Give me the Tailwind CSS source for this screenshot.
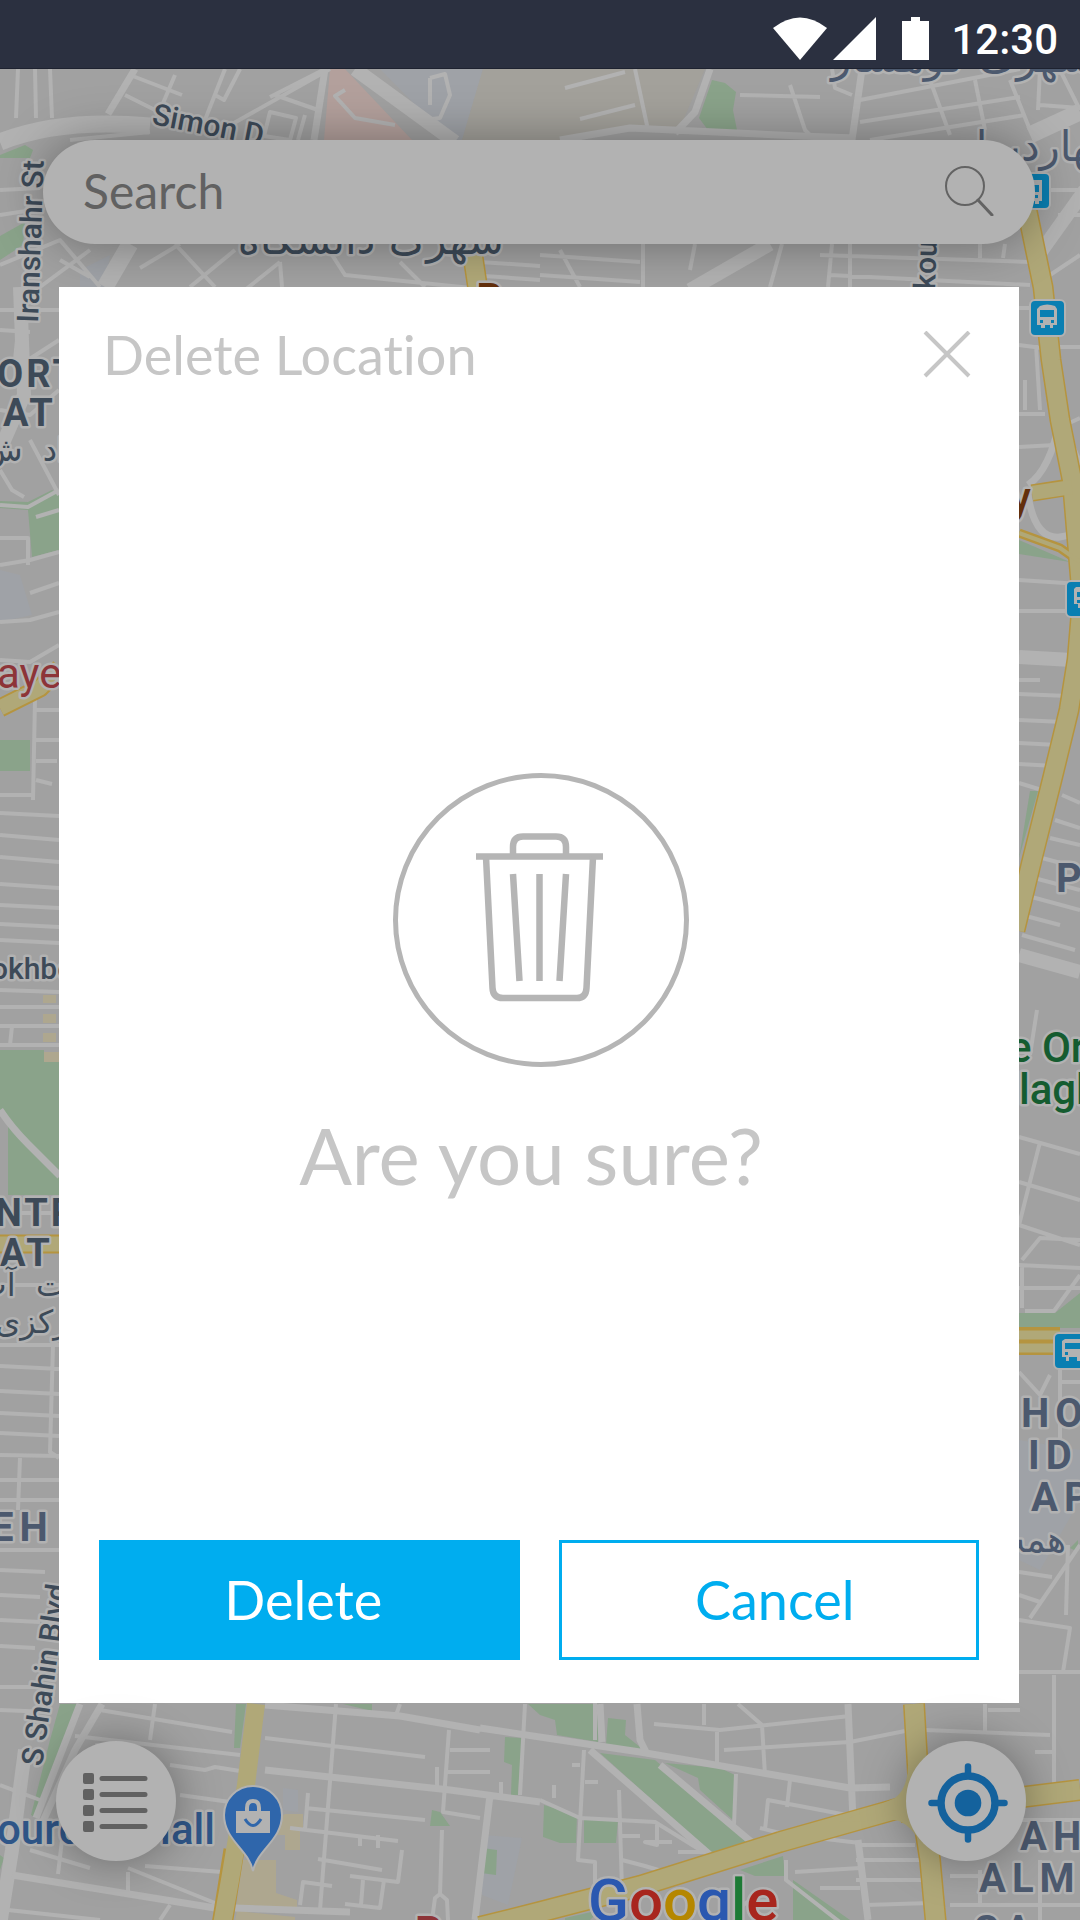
<!DOCTYPE html>
<html lang="en">
<head>
<meta charset="utf-8">
<meta name="viewport" content="width=device-width, initial-scale=1">
<title>Delete Location</title>
<script src="https://cdn.jsdelivr.net/npm/@tailwindcss/browser@4"></script>
</head>
<body class="flex min-h-screen flex-col bg-[#a1a1a1] font-['Lato',sans-serif] [font-variant-ligatures:no-common-ligatures]">

<header class="relative z-10 flex h-[69px] items-center justify-end border-b border-[#1e2230] bg-[#2b3040] pt-2 pr-[22px] text-white">
  <svg class="h-11 w-40" viewBox="0 0 160 44" fill="#fff" aria-hidden="true">
    <path d="M2 12Q29-9 56 12L29 44Z"/>
    <path d="M62 44L105 1V44Z"/>
    <path d="M131 5H140V1H149V5H158V44H131Z"/>
  </svg>
  <span class="ml-5 pt-1 font-['Roboto',sans-serif] text-[42px] leading-none font-medium">12:30</span>
</header>

<main class="relative flex grow flex-col overflow-hidden">
  <!-- Street map -->
  <svg class="absolute inset-0 size-full" viewBox="0 69 1080 1851" preserveAspectRatio="xMidYMid slice" role="img" aria-label="Map">
    <rect y="69" width="1080" height="1851" fill="#a1a1a1"/>
    <!-- built-up areas -->
    <g>
      <path fill="#b3a09c" d="M330 69H345L412 140H324Z"/>
      <path fill="#9fa2a7" d="M380 69H483L462 140H450ZM0 570L20 575 32 615 0 622ZM1019 1440L1080 1450V1500L1040 1570 1019 1560ZM80 270L110 255 105 287H80ZM283 1788L298 1790V1812L283 1810ZM482 1835L522 1838 508 1905 482 1895Z"/>
      <path fill="#a3a19b" d="M483 69H705L680 128 600 130 560 140H462Z"/>
      <path fill="#aea78f" d="M43 995H56V1003H43ZM43 1014H56V1023H43ZM43 1033H56V1042H43ZM44 1052H59V1062H44ZM242 1860H276V1893L297 1900V1912H236ZM285 1814H303V1828H300V1850H285V1835H275V1820ZM237 1911L295 1917V1920H235Z"/>
    </g>
    <!-- parks -->
    <path fill="#8aa38a" d="M0 155L25 145 33 150 30 158H0ZM0 236L25 222 23 245 0 260ZM712 80L725 83 736 92 733 110 737 130H708L699 118ZM0 501L28 502 52 490 59 493V550L32 557 28 510 0 508ZM0 740H30V771H0ZM0 1050H44V1062H59V1195H8V1122L0 1112ZM1019 540L1070 562 1019 554ZM1030 791H1038L1019 858ZM1019 1313H1055L1080 1293V1328H1019ZM60 1704H80L36 1818 31 1815 50 1740ZM236 1704H246L240 1748H234ZM343 1704H372V1711ZM505 1737L522 1738 518 1795H511L512 1765 504 1762ZM432 1810L440 1812 450 1826H430ZM482 1848L497 1850 496 1875 481 1873ZM528 1704H600L598 1742 557 1735 555 1720 540 1715ZM608 1718L626 1720 625 1735 645 1751 606 1745ZM600 1753L655 1760 750 1842 712 1854ZM665 1763L720 1768 735 1775 733 1820 700 1790 698 1778ZM544 1805L577 1815 576 1843H560L543 1837ZM584 1820H618L616 1843H584ZM740 1870L783 1856 785 1876H755ZM793 1880L850 1920H793ZM0 1855L4 1858 0 1870ZM565 1918L600 1910 590 1920H565ZM1070 1548L1078 1540V1552Z"/>
    <!-- minor streets -->
    <g fill="none" stroke="#b2b2b2" stroke-width="4" stroke-linejoin="round">
      <path d="M125 95L165 115M130 75L182 95M175 75L158 115M35 69L36 118M50 69L52 118M18 69L16 118M270 97L325 69M330 69L225 128M275 95L318 110M225 69L203 125M240 69L224 100 215 95M345 90L335 96 355 118 395 125M270 112L296 118 290 140 264 136ZM305 115L298 140M430 78V105M430 78L445 74 450 95 440 118 425 120M70 140L150 132M0 190L40 188M0 215L45 208"/>
      <path d="M140 268L180 244M190 287L235 250M245 290L280 262M175 244L215 287M280 262L282 287M325 244L345 275 540 295M400 262L425 287M470 275L540 280M480 262L540 266M60 260L90 277M0 265L60 240 100 287M40 287L90 250"/>
      <path d="M860 100L1020 69M860 122L1020 97M870 140L1025 115M930 80L950 135M975 80L985 130M1010 80L1030 130M790 85L805 130 815 140M740 95L820 97M635 69L648 130M565 88L625 72M580 119L635 105M1040 69L1038 110M1040 105L1080 108M832 69L835 88 852 95M1060 70L1080 110"/>
      <path d="M560 250L580 287M540 255L640 262M540 275L640 282M643 244V287M695 244L690 270M782 244L770 287M832 244L828 287M850 244V287M820 255L1030 262M830 275L1030 285M980 244V258M1005 244L1003 258M1050 275L1080 255M1050 190H1080M1058 215H1080"/>
      <!-- west side -->
      <path d="M0 310H59M0 330L30 332M18 330L15 360M28 360L59 340M0 410L30 415 59 390M0 470L12 490 24 497M30 440L59 495M0 505L28 507 59 490M36 517L59 510M0 538H28V565M0 565L30 560 59 552M30 593L59 583M0 622L30 620 59 612M0 660L30 662 59 645M35 700L33 800M36 710H59M36 740H59M36 761H57M0 795H33M36 780L52 784"/>
      <path d="M0 813L59 816M0 835L59 840M0 857L59 862M0 884L59 888M0 905L59 908M0 924L59 927M0 940L59 943M0 990L59 992M0 1007H59M0 1026H59M0 1045H59M12 1026L10 1045"/>
      <path d="M0 1213H59M0 1243H59M0 1285H59M0 1345H59M0 1366L59 1369M0 1391L59 1394M0 1413L59 1416M0 1433L59 1436M0 1455L59 1456M53 1345L50 1452 59 1458M20 1458L18 1510M0 1480H59M0 1500H59M0 1550H59M0 1570L45 1572M0 1595L40 1597M0 1620L40 1622M0 1646L35 1648M0 1687H55M0 1710L50 1712"/>
      <!-- east side -->
      <path d="M1060 347H1080M1019 308H1030M1019 345L1042 348M1036 345L1040 410M1025 410V380M1019 414H1045M1019 447L1055 445M1065 425L1080 418M1019 580L1080 584M1019 611H1076M1019 680H1040M1019 694L1068 696M1019 720L1064 722M1019 743L1058 745M1019 764L1055 766M1019 783L1045 791M1062 795L1080 803M1055 820L1080 828M1050 838L1080 845M1042 858L1080 868M1034 878L1080 890M1028 896L1080 910M1022 915L1060 925M1022 935L1075 950"/>
      <path d="M1037 1010L1030 1055M1019 1137L1080 1154M1040 1142L1019 1225M1019 1182L1080 1200M1019 1225L1080 1245M1022 1260L1040 1238 1080 1240M1019 1265L1080 1268M1022 1265V1308M1019 1288H1080M1025 1311H1054L1080 1275M1060 1370V1440M1060 1382H1080M1019 1372L1040 1395 1050 1375M1019 1572L1052 1577M1019 1595L1040 1602M1019 1620L1070 1628 1063 1672M1030 1618L1080 1545M1068 1545L1066 1615M1019 1672H1080M1054 1675V1790M1035 1752H1052"/>
      <!-- south side -->
      <path d="M100 1710L232 1732M75 1736L240 1755M95 1745L130 1755M155 1704L150 1740M170 1765L205 1770 215 1767 240 1771M180 1795L230 1802M0 1785L40 1800M30 1850L90 1868M62 1840L58 1874M128 1872V1892M145 1866L222 1872M128 1868L220 1905M170 1905L160 1920M8 1910L100 1920"/>
      <path d="M336 1704L320 1910M265 1738L425 1757M305 1808L425 1820M308 1793L305 1830M449 1730L443 1812 480 1818M450 1750H490M447 1772H490M525 1704L520 1795M437 1767V1790M400 1704L395 1718M290 1828L398 1841M360 1835V1846M378 1835V1848M318 1859L382 1870M350 1876L398 1882 402 1850M363 1880L361 1905M345 1904L380 1908 384 1880M442 1830L440 1895M432 1920L435 1898 440 1894 447 1900 448 1920M300 1905L303 1882 332 1886M501 1782V1800"/>
      <path d="M654 1724L720 1730 850 1716M704 1704V1725M738 1704L762 1725 765 1775M717 1730V1762M724 1750L850 1742 905 1731M736 1774L734 1825M790 1780L787 1807M765 1830L768 1800 852 1816M584 1750L578 1860 595 1862V1890M540 1800L580 1818 655 1822 710 1856M619 1790L622 1890M572 1765H580M585 1782H598M554 1785V1798M620 1836H640M657 1825V1845L645 1842 672 1842M678 1852H710M622 1860L645 1866 665 1872M786 1860V1880L850 1930M795 1872L860 1868M820 1888H860M858 1845H915M856 1860L920 1860M856 1880H922M866 1905L930 1903M950 1876H985M925 1730L1050 1735M985 1704V1735M988 1710H1020M760 1828L800 1838M800 1836L860 1843M1000 1820H1080M1000 1780V1790M950 1905H1080M980 1870V1905M1040 1860V1920M595 1700V1740M767 1890L735 1910"/>
    </g>
    <!-- wider streets -->
    <g fill="none" stroke="#b2b2b2" stroke-linejoin="round">
      <path stroke-width="17" d="M0 142Q60 118 150 126M1030 135L1080 112M130 244L105 287"/>
      <path stroke-width="14" d="M355 69L455 142M690 290L770 244M1035 260L1085 190M1019 955L1080 972M1019 657L1072 660M20 287L24 395 0 450M25 1750L12 1850 0 1925"/>
      <path stroke-width="7" d="M325 69L314 140M135 69L108 114M710 69L695 112 675 133M560 140L630 128 800 136 855 138M862 69L852 140M0 1110Q12 1128 28 1144L60 1176M12 1875L215 1908M265 1770L450 1790 540 1802M265 1705L400 1716 480 1730M480 1728L640 1752 850 1788 890 1787M590 1750L710 1855M660 1765L755 1845M600 1704L602 1742M637 1704L640 1740 646 1752M848 1704L853 1820M858 1840L868 1920M80 1704L36 1818M102 1704L75 1750 40 1828M490 1795L475 1920M1028 485Q1050 470 1060 420M1028 495Q1035 540 1060 537T1068 510M235 1908L350 1912M1060 420L1080 465"/>
    </g>
    <!-- main roads with their orange casing -->
    <g fill="none" stroke-linejoin="round">
      <g stroke="#b5943f">
        <path stroke-width="21" d="M1026 205L1043 287 1051 360 1060 420 1072 480 1082 600 1077 660 1069 710 1052 780 1032 860 1015 930"/>
        <path stroke-width="17" d="M1032 493L1070 487"/>
        <path stroke-width="9" d="M1019 533L1060 548 1080 562"/>
        <path stroke-width="28" d="M1019 1341H1060"/>
        <path stroke-width="21" d="M472 250L478 290M234 1850L222 1925"/>
        <path stroke-width="22" d="M480 1927L540 1912 640 1886 780 1842 900 1808M914 1704L919 1790 930 1860 936 1925M900 1812L1080 1790"/>
        <path stroke-width="19" d="M0 708L40 688 60 668M0 1244H59"/>
      </g>
      <g stroke="#b0a878">
        <path stroke-width="18" d="M1026 205L1043 287 1051 360 1060 420 1072 480 1082 600 1077 660 1069 710 1052 780 1032 860 1015 930"/>
        <path stroke-width="14" d="M1032 493L1072 487"/>
        <path stroke-width="4" d="M1019 533L1060 548 1080 562"/>
        <path stroke-width="9" d="M1019 1335H1060M1019 1348H1060"/>
        <path stroke-width="18" d="M472 250L478 290M256 1704L246 1785 230 1880 222 1925"/>
        <path stroke-width="19" d="M480 1927L540 1912 640 1886 780 1842 900 1808M914 1704L919 1790 930 1860 936 1925M900 1812L1080 1790"/>
        <path stroke-width="15" d="M0 708L40 688 60 668M0 1244H59"/>
      </g>
      <path fill="#b0a878" d="M840 1822L895 1798Q908 1788 908 1765L935 1790 925 1850Q910 1822 895 1820Z"/>
    </g>
    <!-- transit stops -->
    <g fill="#0a7fb2" stroke="#b2b2b2" stroke-width="2">
      <rect x="1015" y="173" width="35" height="36" rx="5"/>
      <rect x="1030" y="300" width="35" height="36" rx="5"/>
      <rect x="1066" y="581" width="35" height="36" rx="5"/>
      <rect x="1054" y="1333" width="35" height="36" rx="5"/>
    </g>
    <g fill="#b2b2b2" fill-rule="evenodd">
      <path d="M1023 180H1042V201H1039V204H1035V201H1030V204H1026V201H1023ZM1026 185V192H1039V185ZM1027 195V198H1030V195ZM1035 195V198H1038V195Z"/>
      <path d="M1040 306Q1047 303 1055 306L1057 309V325H1053V328H1050V325H1045V328H1041V325H1037V309ZM1040 310V317H1054V310ZM1040 320V323H1043V320ZM1051 320V323H1054V320Z"/>
      <path d="M1076 587H1092V608H1078V604H1074V589ZM1077 592V597H1090V592ZM1077 600V603H1080V600Z"/>
      <path d="M1065 1339H1080V1361H1077V1357H1069V1361H1066V1357H1062V1341ZM1065 1343V1349H1080V1343ZM1065 1352V1355H1068V1352Z"/>
    </g>
    <!-- place names -->
    <g class="font-['Roboto','Noto_Sans',sans-serif]" stroke="#b2b2b2" stroke-width="5" stroke-linejoin="round" paint-order="stroke" fill="#3d4a58">
      <g class="text-[30px] font-medium">
        <text transform="translate(151 124) rotate(11)">Simon D</text>
        <text transform="translate(38 323) rotate(-88)">Iranshahr St</text>
        <text transform="translate(935 290) rotate(-88)">kou</text>
        <text transform="translate(356 320) rotate(-88)">es</text>
        <text x="-9" y="979">okhbe</text>
        <text transform="translate(42 1767) rotate(-82)">S Shahin Blvd</text>
      </g>
      <g class="text-[38px] font-bold tracking-[3px]">
        <text x="-3" y="387">ORT</text>
        <text x="3" y="426">AT</text>
        <text x="-5" y="1226">NTR</text>
        <text x="0" y="1266">AT</text>
      </g>
      <g class="text-[40px] font-bold tracking-[6px]" fill="#4c596e">
        <text x="-9" y="1541">EH</text>
        <text x="1056" y="892">P</text>
        <text x="1021" y="1427">HO</text>
        <text x="1028" y="1469">ID</text>
        <text x="1031" y="1511">AP</text>
        <text x="1020" y="1850">AH</text>
        <text x="979" y="1892">ALM</text>
        <text x="974" y="1944">SA</text>
      </g>
      <g class="font-['DejaVu_Sans',sans-serif] text-[42px]" direction="rtl">
        <text x="504" y="254">شهرک دانشگاه</text>
        <text x="1094" y="72" fill="#4c596e">شهرک کوهسار</text>
        <text x="1118" y="161" fill="#4c596e">چهاردیواری</text>
        <text x="66" y="461" class="text-[32px]">اد&#160; ش</text>
        <text x="66" y="1296" class="text-[32px]">ت &#160;آب</text>
        <text x="88" y="1333" class="text-[32px]">مرکزی</text>
        <text x="1066" y="1552" class="text-[36px]" fill="#4c596e">همت</text>
      </g>
      <g class="text-[42px]">
        <text x="-3" y="688" fill="#8d3438">aye</text>
        <text x="988" y="512" fill="#632f0c" class="font-medium">ay</text>
        <text x="476" y="313" fill="#632f0c" class="font-medium">R</text>
        <text x="1009" y="1062" fill="#155c30" class="font-medium">e Or</text>
        <text x="1019" y="1104" fill="#155c30" class="font-medium">lagh</text>
        <text x="-3" y="1844" fill="#2f5688" class="font-medium">ource</text>
        <text x="215" y="1844" text-anchor="end" fill="#2f5688" class="font-medium">Mall</text>
        <text x="415" y="1946" fill="#8d3438" class="font-bold">P</text>
      </g>
      <text x="588" y="1921" class="text-[60px] font-medium"><tspan fill="#2a58b0">G</tspan><tspan fill="#a8261e">o</tspan><tspan fill="#b58700">o</tspan><tspan fill="#2a58b0">g</tspan><tspan fill="#1d7a35">l</tspan><tspan fill="#a8261e">e</tspan></text>
    </g>
    <!-- shopping pin -->
    <path fill="#2f66ab" stroke="#b2b2b2" stroke-width="2" d="M253 1871C249 1850 224 1840 224 1815A29 29 0 0 1 282 1815C282 1840 257 1850 253 1871Z"/>
    <path fill="#b2b2b2" d="M236 1811H270V1833H236Z"/>
    <path fill="none" stroke="#b2b2b2" stroke-width="4" d="M247 1812V1808Q247 1801 253 1801T259 1808V1812"/>
    <path fill="none" stroke="#2f66ab" stroke-width="3" d="M245 1819Q253 1832 261 1819"/>
  </svg>

  <form class="relative mt-[71px] mr-[45px] ml-[43px] flex h-[104px] items-center rounded-full bg-[#b2b2b2] pr-[41px] pb-1 pl-10 shadow-[0_0_50px_rgba(0,0,0,0.35)]" role="search">
    <input type="search" aria-label="Search" placeholder="Search" class="h-16 min-w-0 grow bg-transparent text-5xl leading-none text-[#616161] outline-none placeholder:text-[#616161]">
    <button type="button" aria-label="Search" class="shrink-0">
      <svg class="h-13 w-[50px]" viewBox="0 0 50 52" fill="none" stroke="#636363" aria-hidden="true">
        <circle cx="21" cy="22" r="19" stroke-width="2"/>
        <path stroke-width="3" stroke-linecap="round" d="M34 36L48 51"/>
      </svg>
    </button>
  </form>

  <section role="dialog" aria-labelledby="dialog-title" class="relative mt-[43px] mr-[61px] ml-[59px] flex grow flex-col bg-white px-10 pt-8 pb-[43px]">
    <div class="flex items-center justify-between pr-2 pl-1">
      <h1 id="dialog-title" class="text-[54px] leading-[72px] text-[#c6c6c6]">Delete Location</h1>
      <button type="button" aria-label="Close">
        <svg class="size-12" viewBox="0 0 48 48" stroke="#c6c6c6" stroke-width="4" aria-hidden="true"><path d="M2 1L46 45M46 1L2 45"/></svg>
      </button>
    </div>
    <div class="flex grow flex-col items-center justify-center">
      <svg class="mt-11 ml-[3px] h-[294px] w-[296px]" viewBox="0 0 296 294" fill="none" stroke="#b5b5b5" aria-hidden="true">
        <ellipse cx="148" cy="147" rx="145.500" ry="144.500" stroke-width="5"/>
        <g stroke-width="6.500">
          <path d="M83 83.500H210M120 83V74Q120 63.500 130 63.500H163Q173 63.500 173 74V83"/>
          <path d="M93 84L99.500 215Q100 225 110 225H184Q193 225 193.500 215L200 84M120 101L126.500 208M146.500 101V208M173 101L166.500 208"/>
        </g>
      </svg>
      <p class="mt-10 pr-4 text-[78px] leading-24 text-[#c6c6c6]">Are you sure?</p>
    </div>
    <div class="grid grid-cols-2 gap-[39px]">
      <button type="button" class="h-[120px] bg-[#00adef] pr-3 text-[54px] leading-none text-white">Delete</button>
      <button type="button" class="h-[120px] border-3 border-[#00adef] bg-white pl-3 text-[54px] leading-none text-[#00adef]">Cancel</button>
    </div>
  </section>

  <nav class="relative mt-[38px] mb-[59px] flex justify-between pr-[54px] pl-14" aria-label="Map controls">
    <button type="button" aria-label="Locations list" class="flex size-[120px] items-center justify-center rounded-full bg-[#b2b2b2] pt-1 shadow-[0_0_45px_rgba(0,0,0,0.35)]">
      <svg class="h-[60px] w-[66px]" viewBox="0 0 66 60" fill="#616161" aria-hidden="true">
        <path d="M2 0h7q2 0 2 2v7q0 2-2 2H2q-2 0-2-2V2q0-2 2-2ZM2 16h7q2 0 2 2v7q0 2-2 2H2q-2 0-2-2v-7q0-2 2-2ZM2 32h7q2 0 2 2v7q0 2-2 2H2q-2 0-2-2v-7q0-2 2-2ZM2 48h7q2 0 2 2v7q0 2-2 2H2q-2 0-2-2v-7q0-2 2-2Z"/>
        <path fill="none" stroke="#616161" stroke-width="5" stroke-linecap="round" d="M19 5.500H62M19 21.500H62M19 37.500H62M19 53.500H62"/>
      </svg>
    </button>
    <button type="button" aria-label="My location" class="flex size-[120px] items-center justify-center rounded-full bg-[#b2b2b2] pt-1 pl-1 shadow-[0_0_45px_rgba(0,0,0,0.35)]">
      <svg class="size-20" viewBox="0 0 80 80" fill="none" stroke="#14629d" aria-hidden="true">
        <circle cx="40" cy="40" r="27" stroke-width="7.500"/>
        <circle cx="40" cy="40" r="13.300" fill="#14629d" stroke="none"/>
        <path stroke-width="6.500" stroke-linecap="round" d="M40 3.500V12M40 68V76.500M3.500 40H12M68 40H76.500"/>
      </svg>
    </button>
  </nav>
</main>
</body>
</html>
